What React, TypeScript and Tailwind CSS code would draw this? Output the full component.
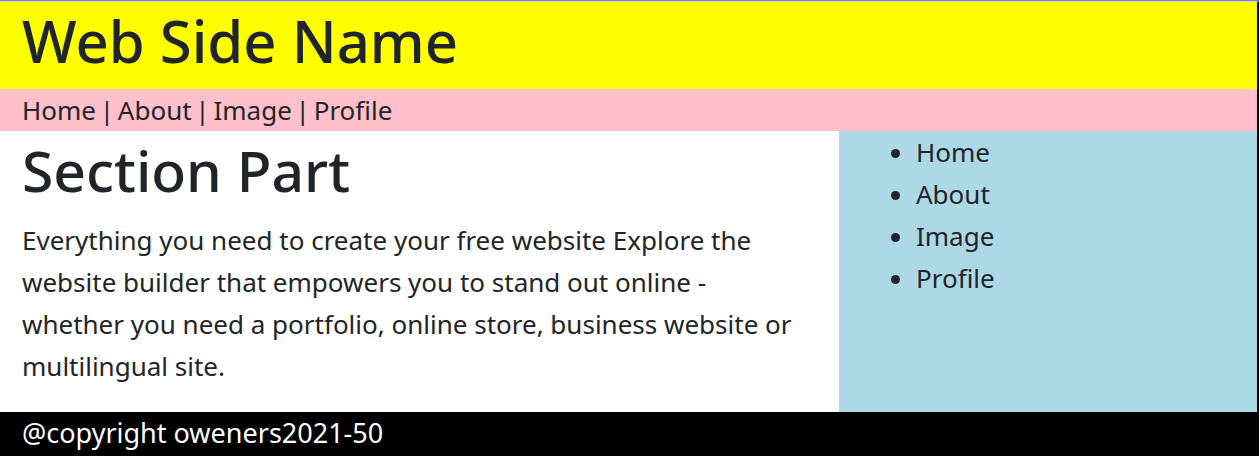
const navLinks = ['Home', 'About', 'Image', 'Profile'];

const App = () => {
  return (
    <div className="min-h-screen border-t border-[#7b8595] font-['Noto_Sans',sans-serif] text-[#212529]">
      <div className="border-t border-[#c6d6ea] border-r-2 border-r-black">
        {/* header */}
        <header className="h-[87px] bg-[#ffff00] px-[22px] pt-[4px]">
          <h1 className="text-[58px] font-medium leading-[70px]">Web Side Name</h1>
        </header>

        {/* top nav */}
        <nav className="h-[42px] bg-[#ffc0cb] px-[22px] text-[26px] leading-[42px] [word-spacing:-3px]">
          {navLinks.join(' | ')}
        </nav>

        {/* main */}
        <main className="grid h-[281px] grid-cols-[839px_1fr]">
          <section className="pl-[22px] pr-[40px]">
            <h2 className="text-[57px] font-medium leading-[76px] mt-[1px] mb-[11px]">Section Part</h2>
            <p className="text-[26px] leading-[42px]">
              Everything you need to create your free website Explore the website builder that
              empowers you to stand out online - whether you need a portfolio, online store,
              business website or multilingual site.
            </p>
          </section>
          <aside className="bg-[#add8e6]">
            <ul className="list-disc pl-[77px] text-[26px] leading-[42px]">
              {navLinks.map((link) => (
                <li key={link}>{link}</li>
              ))}
            </ul>
          </aside>
        </main>

        {/* footer */}
        <footer className="h-[44px] bg-black px-[22px] text-[27px] leading-[42px] text-white">
          @copyright oweners2021-50
        </footer>
      </div>
    </div>
  );
};

export default App;
